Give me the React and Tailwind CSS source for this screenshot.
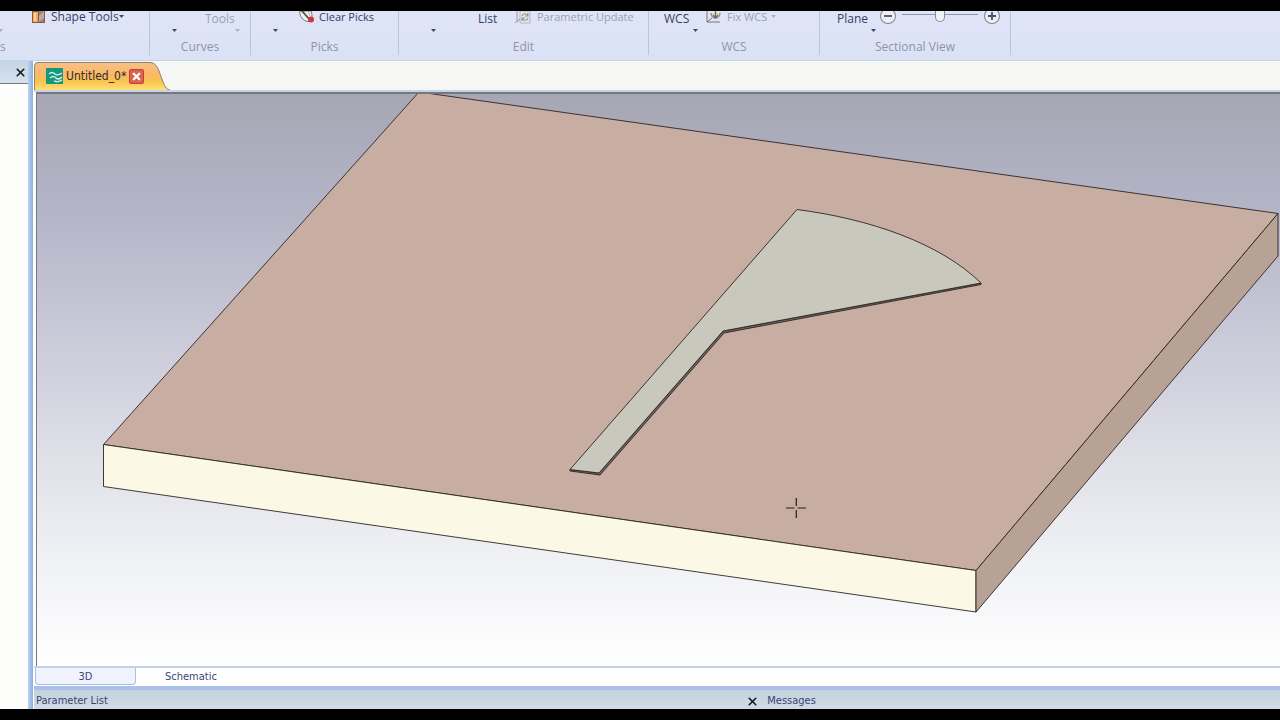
import { X } from "lucide-react";

function Caret({ muted, className = "" }) {
  return (
    <svg viewBox="0 0 5 3" className={`h-[3px] w-[5px] shrink-0 ${muted ? "text-[#aab0c6]" : "text-[#3f4868]"} ${className}`} aria-hidden="true">
      <path d="M0 0h5L2.5 3z" fill="currentColor" />
    </svg>
  );
}

function RibbonGroup({ label, className = "", children }) {
  return (
    <section className={`flex shrink-0 flex-col ${className}`}>
      <div className="flex h-7 items-start">{children}</div>
      <h2 className="text-center leading-4 text-[#8d93ab]">{label}</h2>
    </section>
  );
}

function Divider() {
  return <div className="h-11 w-px shrink-0 bg-[#bcc4dc]" />;
}

function SmallButton({ icon, muted, caret, children, className = "text-[11px]" }) {
  return (
    <button type="button" className={`flex h-3 items-start whitespace-nowrap leading-3 ${muted ? "text-[#9ba0b4]" : "text-[#353f68]"} ${className}`}>
      {icon}
      <span>{children}</span>
      {caret && <Caret muted={muted} className="mt-1" />}
    </button>
  );
}

function BigButton({ muted, children, className = "" }) {
  return (
    <button type="button" className={`flex flex-col items-start leading-4 ${muted ? "text-[#9ba0b4]" : "text-[#353f68]"} ${className}`}>
      <span className="h-4">{children}</span>
      <Caret muted={muted} className="mt-[2px] self-end" />
    </button>
  );
}

function ShapeIcon() {
  return (
    <svg viewBox="0 0 14 12" className="mr-[5px] h-3 w-[14px]" aria-hidden="true">
      <path d="M0 0h13v12H0z" fill="#8a5a3a" />
      <path d="M1 1h5v10H1z" fill="#f3a65a" />
      <path d="M2 2h2v8H2z" fill="#fbd2a0" />
      <path d="M7 0h5v11H7z" fill="#8b8583" />
      <path d="M7 11V5l5-5v7z" fill="#b9aaa2" />
    </svg>
  );
}

function ClearIcon() {
  return (
    <svg viewBox="0 0 16 12" className="mr-1 h-3 w-4" aria-hidden="true">
      <path d="M1 0C0 5 4 10 9 10.500C13 10 14 5 12 0z" fill="#f4f1ec" stroke="#77736f" />
      <path d="M3 0l8 9" stroke="#4c4a4a" strokeWidth="1.800" />
      <path d="M9 0l2 5" stroke="#b5b0a8" />
      <circle cx="12" cy="8.500" r="3" fill="#c93648" />
    </svg>
  );
}

function UpdateIcon() {
  return (
    <svg viewBox="0 0 16 13" className="mr-[6px] h-[13px] w-4" fill="none" aria-hidden="true">
      <path d="M5 0h10v12H5z" fill="#e6e5e6" stroke="#b5b5be" />
      <path d="M2 0v11M0 12l5-4" stroke="#9898a0" />
      <path d="M7 5c1-3 5-3 6 0M13 2v3h-3M13 7c-1 3-5 3-6 0M7 10V7h3" stroke="#929797" strokeWidth="1.200" />
    </svg>
  );
}

function FixIcon() {
  return (
    <svg viewBox="0 0 16 12" className="mr-[5px] h-3 w-4" fill="none" aria-hidden="true">
      <path d="M1 0v11h13M1 11l5-4" stroke="#77777d" />
      <path d="M5 2c0 3 2 5 4.500 5S14 5 14 2" fill="#e4dac2" stroke="#8d8580" strokeWidth="1.300" />
      <path d="M9.500 0v7M7 4l2.500 3L12 4" stroke="#746c66" strokeWidth="1.300" />
    </svg>
  );
}

function RoundButton({ plus, label }) {
  return (
    <button type="button" aria-label={label} className="h-[13px] w-[18px] shrink-0">
      <svg viewBox="0 0 18 13" className="h-[13px] w-[18px]" fill="none">
        <circle cx="9" cy="5" r="7.500" fill="#eceef6" stroke="#8b8e9b" strokeWidth="1.200" />
        <path d={plus ? "M5 5h8M9 1v8" : "M5 5h8"} stroke="#4e5262" strokeWidth="1.800" />
      </svg>
    </button>
  );
}

function Ribbon() {
  return (
    <header className="flex h-[50px] shrink-0 border-b border-[#c6d3e6] bg-linear-to-b from-[#dfe5f6] to-[#dce2f5] font-['Open_Sans','Noto_Sans',sans-serif] text-[12px]">
      <section className="flex w-[149px] shrink-0 flex-col">
        <div className="flex h-7 items-start">
          <Caret muted className="-ml-[2px] mt-[18px]" />
          <SmallButton icon={<ShapeIcon />} caret className="ml-[29px] text-[12px]">Shape Tools</SmallButton>
        </div>
        <h2 className="leading-4 text-[#8d93ab]">s</h2>
      </section>
      <Divider />
      <RibbonGroup label="Curves" className="w-[100px]">
        <Caret className="ml-[22px] mt-[18px]" />
        <BigButton muted className="ml-[28px] w-[35px]">Tools</BigButton>
      </RibbonGroup>
      <Divider />
      <RibbonGroup label="Picks" className="w-[147px]">
        <Caret className="ml-[22px] mt-[18px]" />
        <SmallButton icon={<ClearIcon />} className="ml-[21px] text-[11px]">Clear Picks</SmallButton>
      </RibbonGroup>
      <Divider />
      <RibbonGroup label="Edit" className="w-[249px]">
        <Caret className="ml-8 mt-[18px]" />
        <button type="button" className="ml-[42px] w-[37px] text-left leading-4 text-[#353f68]">List</button>
        <SmallButton icon={<UpdateIcon />} muted>Parametric Update</SmallButton>
      </RibbonGroup>
      <Divider />
      <RibbonGroup label="WCS" className="w-[170px]">
        <BigButton className="ml-[15px] w-[34px]">WCS</BigButton>
        <SmallButton icon={<FixIcon />} muted className="ml-2 text-[11px]">Fix WCS</SmallButton>
        <Caret muted className="ml-1 mt-1" />
      </RibbonGroup>
      <Divider />
      <RibbonGroup label="Sectional View" className="w-[190px]">
        <BigButton className="ml-[17px] w-[39px]">Plane</BigButton>
        <div className="ml-[3px] flex">
          <RoundButton label="Decrease" />
          <input
            type="range"
            aria-label="Plane position"
            defaultValue="50"
            className="mx-[5px] h-[11px] w-[76px] appearance-none bg-[linear-gradient(#8e94aa,#8e94aa)] bg-[length:100%_1px] bg-[position:0_3px] bg-no-repeat [&::-webkit-slider-thumb]:h-[11px] [&::-webkit-slider-thumb]:w-[10px] [&::-webkit-slider-thumb]:appearance-none [&::-webkit-slider-thumb]:rounded-b-[5px] [&::-webkit-slider-thumb]:border [&::-webkit-slider-thumb]:border-t-0 [&::-webkit-slider-thumb]:border-[#858a9c] [&::-webkit-slider-thumb]:bg-[#f0f2f8]"
          />
          <RoundButton plus label="Increase" />
        </div>
      </RibbonGroup>
      <Divider />
    </header>
  );
}

function DocumentTabs() {
  return (
    <div className="flex h-[31px] shrink-0 items-end border-b-2 border-[#c5d3e8] bg-[#f6f7f5]">
      <div className="relative flex h-7 w-[137px] items-center pl-3">
        <svg viewBox="0 0 137 28" className="absolute inset-0 h-7 w-[137px]" aria-hidden="true">
          <defs>
            <linearGradient id="tabFill" x1="0" y1="0" x2="0" y2="1">
              <stop offset="0" stopColor="#f9c086" />
              <stop offset="0.450" stopColor="#fab868" />
              <stop offset="0.700" stopColor="#fcc44b" />
              <stop offset="1" stopColor="#ffe07c" />
            </linearGradient>
          </defs>
          <path d="M.5 28V4Q.5.5 4 .5H116Q122 .5 125 9L129 20Q132 28 136 28" fill="url(#tabFill)" stroke="#8b8375" />
        </svg>
        <svg viewBox="0 0 17 16" className="relative mr-[3px] h-4 w-[17px]" fill="none" aria-hidden="true">
          <path d="M0 0h17v16H0z" fill="#18977f" />
          <path d="M3 6c2-2 4-2 6 0s4 1 7-1M4 10c2-2 4-2 6 0s4 1 6-1M8 13c2 0 4 2 8-1" stroke="#d8f3e6" strokeWidth="1.300" />
        </svg>
        <button type="button" className="relative whitespace-nowrap text-[12px] text-[#302c2b]">Untitled_0*</button>
        <button type="button" aria-label="Close document" className="relative ml-[3px] grid h-[15px] w-[15px] place-items-center rounded-xs border border-[#b8453a] bg-[#e0604c] text-white">
          <X size={11} strokeWidth={5} />
        </button>
      </div>
    </div>
  );
}

function Viewport() {
  return (
    <div className="ml-[2px] min-h-0 flex-1 overflow-hidden border-l border-t-2 border-[#75767e] bg-[linear-gradient(#a6a6b4_0%,#b3b4c6_20%,#cacad9_43%,#dfdfe8_63%,#eff0f4_80%,#ffffff_100%)]">
      <svg viewBox="37 94 1243 572" preserveAspectRatio="xMinYMin slice" className="h-full w-full" role="img" aria-label="3D model" strokeLinejoin="round">
        <g stroke="#2c2524" strokeWidth="0.900">
          <path d="M103.500 444.500L419 92L1278 213.500L976 570.500z" fill="#c8ada3" />
          <path d="M103.500 444.500L976 570.500V612L103.500 486.500z" fill="#fcf8e6" />
          <path d="M976 570.500L1278 213.500V256L976 612z" fill="#b7a295" />
          <path d="M570 469.500L599 473L723 331L981 283V284.500L724 333L600 475L570 471z" fill="#6f665e" />
          <path d="M570 469.500L797 209.500C870 219 940 243 981 283L723 331L599 473z" fill="#c9c8bd" />
        </g>
        <path d="M786 508h8.500M797.500 508h8.500M796.300 498v8M796.300 510v8" stroke="#252020" strokeWidth="1.200" />
      </svg>
    </div>
  );
}

function ViewTabs() {
  return (
    <nav className="flex h-5 shrink-0 border-t-2 border-[#c3d0e6] bg-white text-[#39487b]">
      <button type="button" className="ml-px h-[17px] w-[101px] rounded-b-sm border border-t-0 border-[#a9bfdf] bg-[#f0f2fd] pt-[2px] leading-[14px]">3D</button>
      <button type="button" className="ml-[29px] h-[17px] pt-px leading-[14px]">Schematic</button>
    </nav>
  );
}

function DockTitles() {
  return (
    <footer className="flex h-[23px] shrink-0 items-center border-t-4 border-[#aac0ea] bg-linear-to-b from-[#c3d2dd] to-[#d0dbe6] pl-px pt-1 text-[#39446f]">
      <div className="flex w-7/12 items-center justify-between pl-px pr-[2px]">
        <h2>Parameter List</h2>
        <button type="button" aria-label="Close parameter list" className="text-[#16171c]">
          <X size={13} strokeWidth={3} />
        </button>
      </div>
      <h2 className="pl-[6px]">Messages</h2>
    </footer>
  );
}

export default function App() {
  return (
    <div className="flex h-screen flex-col bg-white font-['DejaVu_Sans_Condensed','DejaVu_Sans',sans-serif] text-[11px]">
      <div className="h-[11px] shrink-0 bg-black" />
      <Ribbon />
      <div className="flex min-h-0 flex-1">
        <aside className="flex w-7 shrink-0 flex-col bg-[#fdfdfc]">
          <div className="flex h-[23px] items-center justify-end border-b border-[#777b84] bg-linear-to-b from-[#c5d4e5] to-[#d7e1ec] pr-px">
            <button type="button" aria-label="Close panel" className="text-[#16171c]">
              <X size={13} strokeWidth={3} />
            </button>
          </div>
        </aside>
        <div className="w-[5px] shrink-0 bg-linear-to-r from-[#b9d2f2] to-[#8eaedb]" />
        <main className="flex min-w-0 flex-1 flex-col pl-px">
          <DocumentTabs />
          <Viewport />
          <ViewTabs />
          <DockTitles />
        </main>
      </div>
      <div className="h-[11px] shrink-0 bg-black" />
    </div>
  );
}
